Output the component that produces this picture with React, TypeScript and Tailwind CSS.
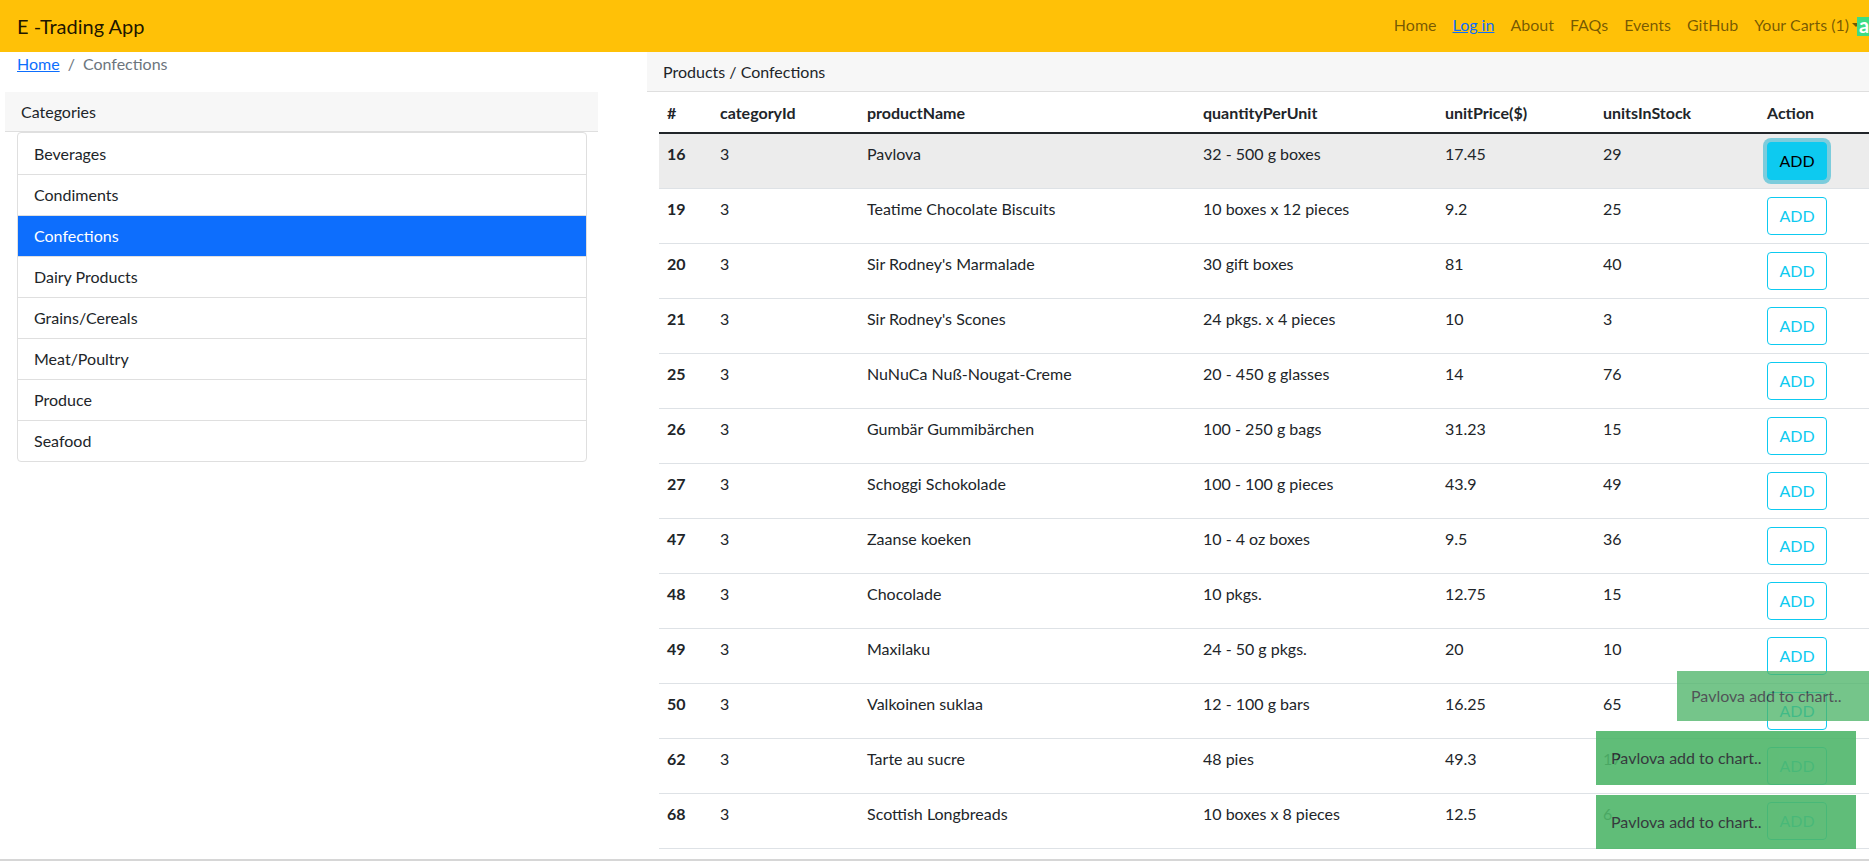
import React from "react";

const NAV = ["Home", "Log in", "About", "FAQs", "Events", "GitHub"];

const CATEGORIES = [
  "Beverages",
  "Condiments",
  "Confections",
  "Dairy Products",
  "Grains/Cereals",
  "Meat/Poultry",
  "Produce",
  "Seafood",
];

const PRODUCTS = [
  { id: 16, name: "Pavlova", qty: "32 - 500 g boxes", price: "17.45", stock: 29 },
  { id: 19, name: "Teatime Chocolate Biscuits", qty: "10 boxes x 12 pieces", price: "9.2", stock: 25 },
  { id: 20, name: "Sir Rodney's Marmalade", qty: "30 gift boxes", price: "81", stock: 40 },
  { id: 21, name: "Sir Rodney's Scones", qty: "24 pkgs. x 4 pieces", price: "10", stock: 3 },
  { id: 25, name: "NuNuCa Nuß-Nougat-Creme", qty: "20 - 450 g glasses", price: "14", stock: 76 },
  { id: 26, name: "Gumbär Gummibärchen", qty: "100 - 250 g bags", price: "31.23", stock: 15 },
  { id: 27, name: "Schoggi Schokolade", qty: "100 - 100 g pieces", price: "43.9", stock: 49 },
  { id: 47, name: "Zaanse koeken", qty: "10 - 4 oz boxes", price: "9.5", stock: 36 },
  { id: 48, name: "Chocolade", qty: "10 pkgs.", price: "12.75", stock: 15 },
  { id: 49, name: "Maxilaku", qty: "24 - 50 g pkgs.", price: "20", stock: 10 },
  { id: 50, name: "Valkoinen suklaa", qty: "12 - 100 g bars", price: "16.25", stock: 65 },
  { id: 62, name: "Tarte au sucre", qty: "48 pies", price: "49.3", stock: 17 },
  { id: 68, name: "Scottish Longbreads", qty: "10 boxes x 8 pieces", price: "12.5", stock: 6 },
];

export default function App() {
  return (
    <div
      className="relative w-[1869px] h-[862px] overflow-hidden bg-white text-[16px] leading-6 text-[#212529] flex flex-col"
      style={{ fontFamily: '"Segoe UI", Lato, "Liberation Sans", sans-serif' }}
    >
      {/* Navbar */}
      <nav className="h-[52px] shrink-0 bg-[#ffc107] flex items-center pl-[17px]">
        <span className="text-[20px] text-black/90">E -Trading App</span>
        <div className="ml-auto -mr-[12px] flex items-center -mt-[3px]">
          {NAV.map((n) => (
            <a
              key={n}
              className={`px-2 ${
                n === "Log in" ? "text-[#0d6efd] underline" : "text-black/55"
              }`}
            >
              {n}
            </a>
          ))}
          <a className="pl-2 text-black/55 flex items-center">
            Your Carts (1)
            <span className="ml-[3px] inline-block w-0 h-0 border-x-[4px] border-x-transparent border-t-[4px] border-t-black/55" />
          </a>
          <span className="-ml-[3px] mt-[3px] w-[24px] h-[19px] bg-[#3ddc84] text-white font-bold text-[20px] leading-[17px] pl-[2px]">
            a
          </span>
        </div>
      </nav>

      <div className="flex flex-1">
        {/* Left column */}
        <div className="w-[647px] shrink-0">
          <div className="pl-[17px] flex text-[#6c757d]">
            <a className="text-[#0d6efd] underline">Home</a>
            <span className="px-2">/</span>
            <span>Confections</span>
          </div>
          <div className="mt-4 ml-[5px] w-[593px] h-[40px] bg-[#f7f7f7] border-b border-[#dfdfdf] px-4 flex items-center">
            Categories
          </div>
          <ul className="ml-[17px] w-[570px] border border-[#dfdfdf] rounded-[4px] overflow-hidden">
            {CATEGORIES.map((c, i) => (
              <li
                key={c}
                className={`h-[41px] px-4 flex items-center ${
                  i > 0 ? "border-t border-[#dfdfdf]" : ""
                } ${c === "Confections" ? "bg-[#0d6efd] text-white border-[#0d6efd]" : ""}`}
              >
                {c}
              </li>
            ))}
          </ul>
        </div>

        {/* Right column */}
        <div className="flex-1 min-w-0">
          <div className="h-[40px] bg-[#f7f7f7] border-b border-[#dfdfdf] px-4 flex items-center">
            Products / Confections
          </div>
          <table className="ml-[12px] w-[1210px] table-fixed border-collapse align-top">
            <colgroup>
              <col className="w-[53px]" />
              <col className="w-[147px]" />
              <col className="w-[336px]" />
              <col className="w-[242px]" />
              <col className="w-[158px]" />
              <col className="w-[164px]" />
              <col className="w-[110px]" />
            </colgroup>
            <thead>
              <tr className="border-b-2 border-[#212529] text-left">
                {["#", "categoryId", "productName", "quantityPerUnit", "unitPrice($)", "unitsInStock", "Action"].map(
                  (h) => (
                    <th key={h} className="px-2 pt-[9px] pb-[7px] font-bold h-[40px]">
                      {h}
                    </th>
                  )
                )}
              </tr>
            </thead>
            <tbody>
              {PRODUCTS.map((p, i) => (
                <tr
                  key={p.id}
                  className={`border-b border-[#dee2e6] align-top ${i === 0 ? "bg-[#ececec]" : ""}`}
                >
                  <th className="p-2 font-bold text-left">{p.id}</th>
                  <td className="p-2">3</td>
                  <td className="p-2">{p.name}</td>
                  <td className="p-2">{p.qty}</td>
                  <td className="p-2">{p.price}</td>
                  <td className="p-2">{p.stock}</td>
                  <td className="p-2">
                    {i === 0 ? (
                      <button className="w-[60px] h-[38px] rounded-[4px] border border-[#0dcaf0] bg-[#0dcaf0] text-black ring-4 ring-[rgba(11,172,204,0.5)]">
                        ADD
                      </button>
                    ) : (
                      <button className="w-[60px] h-[38px] rounded-[4px] border border-[#0dcaf0] text-[#0dcaf0] bg-transparent">
                        ADD
                      </button>
                    )}
                  </td>
                </tr>
              ))}
            </tbody>
          </table>
        </div>
      </div>

      <div className="h-[2px] mb-[1px] bg-[#d6d6d6] shrink-0" />

      {/* Toasts */}
      <div className="absolute right-[13px] bottom-[13px] flex flex-col items-end gap-[10px]">
        <div className="w-[260px] h-[50px] translate-x-[81px] bg-[#4fb66a] opacity-[0.78] px-[14px] flex items-center text-[#212529]">
          Pavlova add to chart..
        </div>
        <div className="w-[260px] h-[54px] bg-[#4fb66a] opacity-90 px-[15px] flex items-center text-[#212529]">
          Pavlova add to chart..
        </div>
        <div className="w-[260px] h-[54px] bg-[#4fb66a] opacity-90 px-[15px] flex items-center text-[#212529]">
          Pavlova add to chart..
        </div>
      </div>
    </div>
  );
}
